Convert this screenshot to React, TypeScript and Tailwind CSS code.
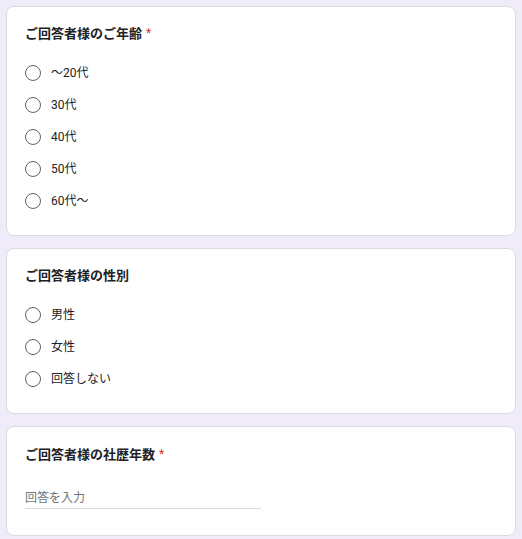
import React from "react";

const font = { fontFamily: "Roboto, 'Noto Sans CJK JP', sans-serif" };

function Radio({ label }: { label: string }) {
  return (
    <div className="flex h-8 items-center gap-[10px]">
      <span className="box-border block h-4 w-4 rounded-full border-[1.5px] border-[#5f6368]" />
      <span className="text-[12px] leading-4 text-[#202124]">{label}</span>
    </div>
  );
}

function Title({ text, required }: { text: string; required?: boolean }) {
  return (
    <div className="flex h-5 items-center text-[13px] font-bold leading-5 text-[#202124]">
      <span>{text}</span>
      {required && <span className="ml-1 -mt-[2px] text-[12px] font-normal text-[#d93025]">*</span>}
    </div>
  );
}

function Card({ children }: { children: React.ReactNode }) {
  return (
    <div className="rounded-lg border border-[#dadce0] bg-white px-[18px] pt-[17px] pb-[18px]">
      {children}
    </div>
  );
}

export default function App() {
  return (
    <div style={font} className="min-h-[539px] bg-[#f0ebf8] px-[6px] pt-[6px] pb-4">
      <div className="flex flex-col gap-3">
        <Card>
          <Title text="ご回答者様のご年齢" required />
          <div className="mt-[13px] flex flex-col">
            {["～20代", "30代", "40代", "50代", "60代～"].map((l) => (
              <Radio key={l} label={l} />
            ))}
          </div>
        </Card>
        <Card>
          <Title text="ご回答者様の性別" />
          <div className="mt-[13px] flex flex-col">
            {["男性", "女性", "回答しない"].map((l) => (
              <Radio key={l} label={l} />
            ))}
          </div>
        </Card>
        <div className="rounded-lg border border-[#dadce0] bg-white px-[18px] pt-[18px] pb-[26px]">
          <Title text="ご回答者様の社歴年数" required />
          <div className="mt-[25px] w-[236px] border-b border-[#dadce0] pb-[2px]">
            <span className="block text-[12px] leading-4 text-[#70757a]">回答を入力</span>
          </div>
        </div>
      </div>
    </div>
  );
}
